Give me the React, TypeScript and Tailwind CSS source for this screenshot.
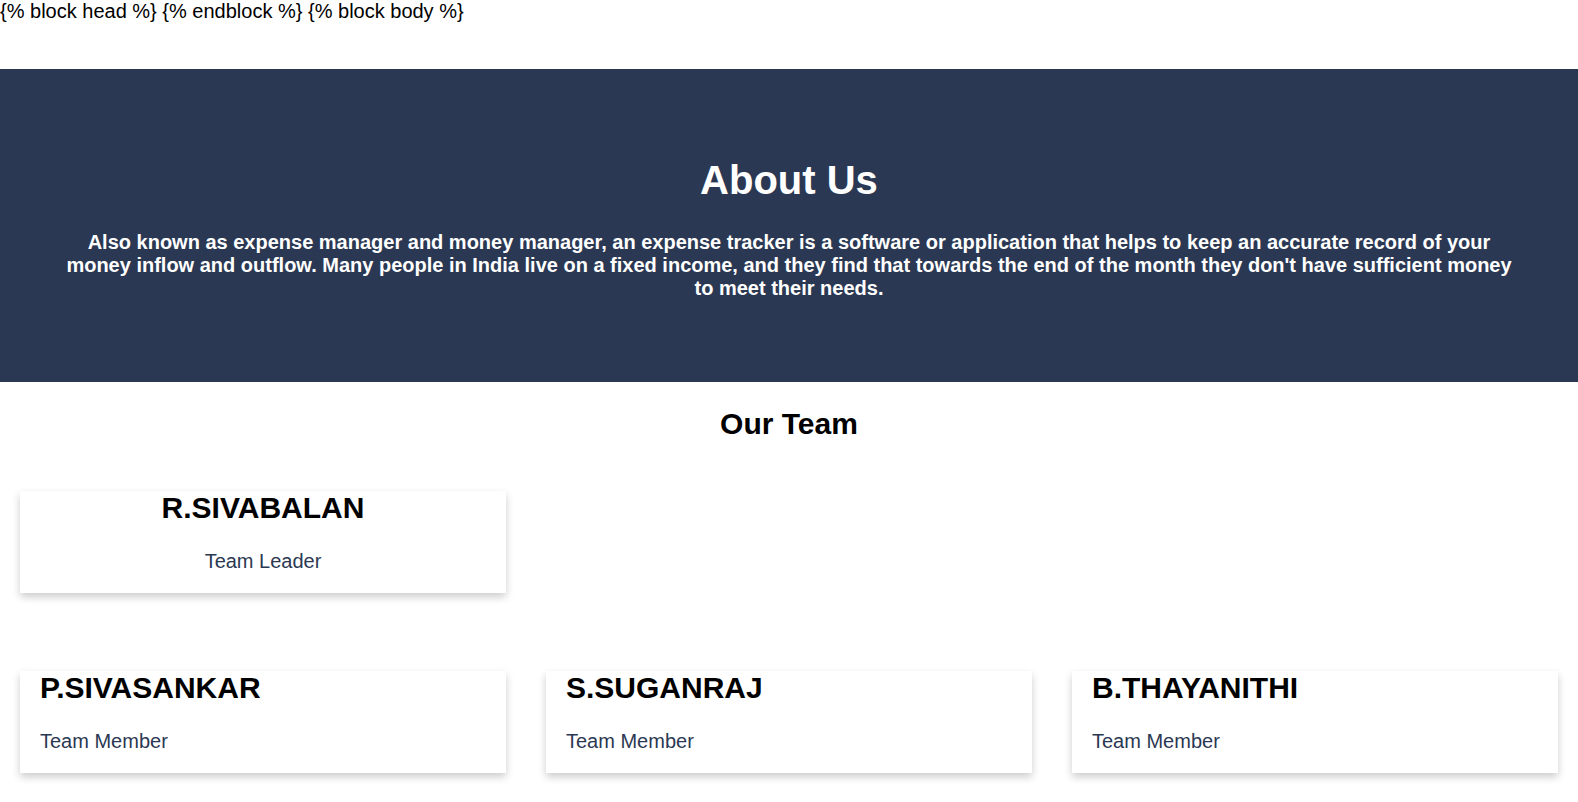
const team = [
  { name: 'P.SIVASANKAR', role: 'Team Member' },
  { name: 'S.SUGANRAJ', role: 'Team Member' },
  { name: 'B.THAYANITHI', role: 'Team Member' },
];

function MemberCard({ name, role, centered }: { name: string; role: string; centered?: boolean }) {
  return (
    <div
      className={`bg-white pb-5 shadow-[0_4px_8px_0_rgba(0,0,0,0.2)] ${centered ? 'text-center' : 'pl-5'}`}
    >
      <h3 className="text-[30px] font-bold leading-[34px] text-black">{name}</h3>
      <p className="mt-[25px] text-[20px] leading-[23px] text-[#2b3853]">{role}</p>
    </div>
  );
}

export default function App() {
  return (
    <div className="min-h-screen bg-white font-['Liberation_Sans',Arial,sans-serif] text-black">
      <div className="text-[20px] leading-[23px]">
        {'{% block head %} {% endblock %} {% block body %}'}
      </div>

      <section className="mt-[46px] bg-[#2b3853] px-[60px] pb-[82px] pt-[88px] text-center text-white">
        <h1 className="text-[40px] font-bold leading-[46px]">About Us</h1>
        <p className="mt-[28px] text-[20px] font-bold leading-[23px]">
          Also known as expense manager and money manager, an expense tracker is a software or
          application that helps to keep an accurate record of your money inflow and outflow. Many
          people in India live on a fixed income, and they find that towards the end of the month
          they don't have sufficient money to meet their needs.
        </p>
      </section>

      <h2 className="mt-[25px] text-center text-[30px] font-bold leading-[34px]">Our Team</h2>

      <div className="mt-[50px] grid grid-cols-3">
        <div className="px-5">
          <MemberCard name="R.SIVABALAN" role="Team Leader" centered />
        </div>
      </div>

      <div className="mt-[78px] grid grid-cols-3">
        {team.map((m) => (
          <div key={m.name} className="px-5">
            <MemberCard name={m.name} role={m.role} />
          </div>
        ))}
      </div>
    </div>
  );
}
